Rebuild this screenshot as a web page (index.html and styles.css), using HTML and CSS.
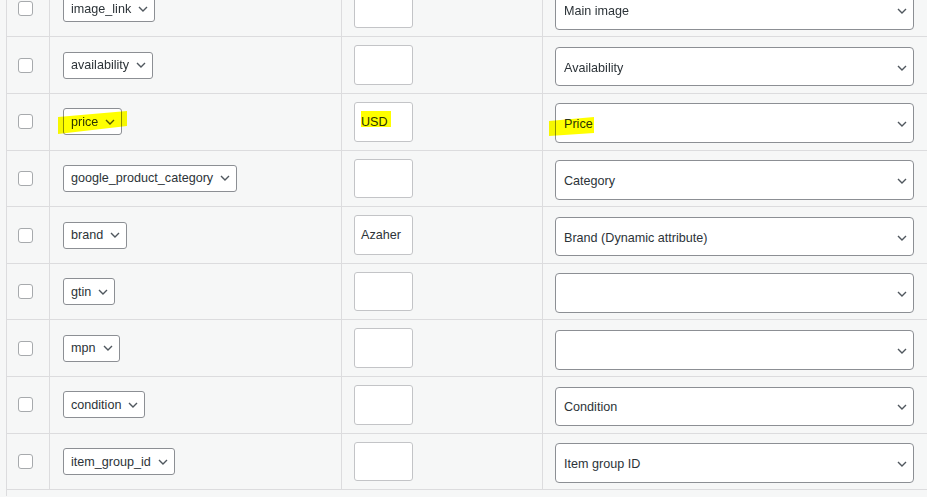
FILE: index.html
```html
<!DOCTYPE html>
<html>
<head>
<meta charset="utf-8">
<link rel="stylesheet" href="styles.css">
</head>
<body>
<div class="table">
  <div class="row">
    <div class="cell c-check"><span class="checkbox"></span></div>
    <div class="cell c-field"><div class="mini-select"><span>image_link</span><svg class="chev" viewBox="0 0 10 6"><path d="M1 1l4 4 4-4"/></svg></div></div>
    <div class="cell c-prefix"><div class="text-input"></div></div>
    <div class="cell c-map"><div class="select"><span>Main image</span><svg class="chev" viewBox="0 0 10 6"><path d="M1 1l4 4 4-4"/></svg></div></div>
  </div>
  <div class="row">
    <div class="cell c-check"><span class="checkbox"></span></div>
    <div class="cell c-field"><div class="mini-select"><span>availability</span><svg class="chev" viewBox="0 0 10 6"><path d="M1 1l4 4 4-4"/></svg></div></div>
    <div class="cell c-prefix"><div class="text-input"></div></div>
    <div class="cell c-map"><div class="select"><span>Availability</span><svg class="chev" viewBox="0 0 10 6"><path d="M1 1l4 4 4-4"/></svg></div></div>
  </div>
  <div class="row">
    <div class="cell c-check"><span class="checkbox"></span></div>
    <div class="cell c-field"><div class="mini-select"><span>price</span><svg class="chev" viewBox="0 0 10 6"><path d="M1 1l4 4 4-4"/></svg></div><span class="hl hl-price"></span></div>
    <div class="cell c-prefix"><div class="text-input">USD</div><span class="hl hl-usd"></span></div>
    <div class="cell c-map"><div class="select"><span>Price</span><svg class="chev" viewBox="0 0 10 6"><path d="M1 1l4 4 4-4"/></svg></div><span class="hl hl-price2"></span></div>
  </div>
  <div class="row">
    <div class="cell c-check"><span class="checkbox"></span></div>
    <div class="cell c-field"><div class="mini-select"><span>google_product_category</span><svg class="chev" viewBox="0 0 10 6"><path d="M1 1l4 4 4-4"/></svg></div></div>
    <div class="cell c-prefix"><div class="text-input"></div></div>
    <div class="cell c-map"><div class="select"><span>Category</span><svg class="chev" viewBox="0 0 10 6"><path d="M1 1l4 4 4-4"/></svg></div></div>
  </div>
  <div class="row">
    <div class="cell c-check"><span class="checkbox"></span></div>
    <div class="cell c-field"><div class="mini-select"><span>brand</span><svg class="chev" viewBox="0 0 10 6"><path d="M1 1l4 4 4-4"/></svg></div></div>
    <div class="cell c-prefix"><div class="text-input">Azaher</div></div>
    <div class="cell c-map"><div class="select"><span>Brand (Dynamic attribute)</span><svg class="chev" viewBox="0 0 10 6"><path d="M1 1l4 4 4-4"/></svg></div></div>
  </div>
  <div class="row">
    <div class="cell c-check"><span class="checkbox"></span></div>
    <div class="cell c-field"><div class="mini-select"><span>gtin</span><svg class="chev" viewBox="0 0 10 6"><path d="M1 1l4 4 4-4"/></svg></div></div>
    <div class="cell c-prefix"><div class="text-input"></div></div>
    <div class="cell c-map"><div class="select"><span></span><svg class="chev" viewBox="0 0 10 6"><path d="M1 1l4 4 4-4"/></svg></div></div>
  </div>
  <div class="row">
    <div class="cell c-check"><span class="checkbox"></span></div>
    <div class="cell c-field"><div class="mini-select"><span>mpn</span><svg class="chev" viewBox="0 0 10 6"><path d="M1 1l4 4 4-4"/></svg></div></div>
    <div class="cell c-prefix"><div class="text-input"></div></div>
    <div class="cell c-map"><div class="select"><span></span><svg class="chev" viewBox="0 0 10 6"><path d="M1 1l4 4 4-4"/></svg></div></div>
  </div>
  <div class="row">
    <div class="cell c-check"><span class="checkbox"></span></div>
    <div class="cell c-field"><div class="mini-select"><span>condition</span><svg class="chev" viewBox="0 0 10 6"><path d="M1 1l4 4 4-4"/></svg></div></div>
    <div class="cell c-prefix"><div class="text-input"></div></div>
    <div class="cell c-map"><div class="select"><span>Condition</span><svg class="chev" viewBox="0 0 10 6"><path d="M1 1l4 4 4-4"/></svg></div></div>
  </div>
  <div class="row">
    <div class="cell c-check"><span class="checkbox"></span></div>
    <div class="cell c-field"><div class="mini-select"><span>item_group_id</span><svg class="chev" viewBox="0 0 10 6"><path d="M1 1l4 4 4-4"/></svg></div></div>
    <div class="cell c-prefix"><div class="text-input"></div></div>
    <div class="cell c-map"><div class="select"><span>Item group ID</span><svg class="chev" viewBox="0 0 10 6"><path d="M1 1l4 4 4-4"/></svg></div></div>
  </div>
  <div class="foot"></div>
</div>
</body>
</html>
```
FILE: styles.css
```css
html, body {
  margin: 0;
  padding: 0;
  background: #f6f7f7;
  overflow: hidden;
}

body {
  font-family: "Liberation Sans", Arial, sans-serif;
  font-size: 12.6px;
  color: #2c3338;
}

.table {
  margin: -19.325px 0 0 6px;
  width: 922px;
  box-sizing: border-box;
  border-left: 1px solid #dcdcde;
  border-right: 1px solid #dcdcde;
}

.row {
  display: grid;
  grid-template-columns: 42px 292px 201px 1fr;
  height: 56.625px;
  box-sizing: border-box;
  border-bottom: 1px solid #dcdcde;
}

.cell {
  position: relative;
  display: flex;
  align-items: center;
  box-sizing: border-box;
  min-width: 0;
}

.cell + .cell {
  border-left: 1px solid #dcdcde;
}

.c-check {
  padding-left: 11px;
}

.checkbox {
  display: block;
  width: 15px;
  height: 15px;
  box-sizing: border-box;
  border: 1px solid #a7aaad;
  border-radius: 3px;
  background: #fff;
}

.c-field {
  padding-left: 13px;
}

.mini-select {
  display: inline-flex;
  align-items: center;
  gap: 7px;
  height: 27px;
  box-sizing: border-box;
  padding: 0 6px 0 7px;
  border: 1px solid #8c8f94;
  border-radius: 3px;
  background: #fff;
  white-space: nowrap;
}

.chev {
  width: 10px;
  height: 6px;
  flex: none;
}

.chev path {
  fill: none;
  stroke: #50575e;
  stroke-width: 1.4;
}

.c-prefix {
  padding-left: 12px;
}

.text-input {
  display: flex;
  align-items: center;
  width: 59px;
  height: 39.6px;
  box-sizing: border-box;
  padding: 0 6px;
  border: 1px solid #c3c4c7;
  border-radius: 3px;
  background: #fff;
}

.c-map {
  padding: 3px 13px 0 12px;
}

.select {
  flex: 1;
  display: flex;
  align-items: center;
  justify-content: space-between;
  height: 39.6px;
  box-sizing: border-box;
  padding: 2px 6px 0 8px;
  border: 1px solid #8c8f94;
  border-radius: 4px;
  background: #fff;
}

.hl {
  position: absolute;
  background: #ffff00;
  mix-blend-mode: multiply;
}

.hl-price {
  left: 8px;
  top: 17px;
  width: 69px;
  height: 23px;
  clip-path: polygon(0 6px, 100% 0, 100% 15px, 0 100%);
}

.hl-usd {
  left: 19px;
  top: 17px;
  width: 30px;
  height: 16px;
}

.hl-price2 {
  left: 6px;
  top: 23px;
  width: 45px;
  height: 19px;
  clip-path: polygon(0 4px, 100% 0, 100% 16px, 0 100%);
}

.foot {
  height: 6px;
}
```
